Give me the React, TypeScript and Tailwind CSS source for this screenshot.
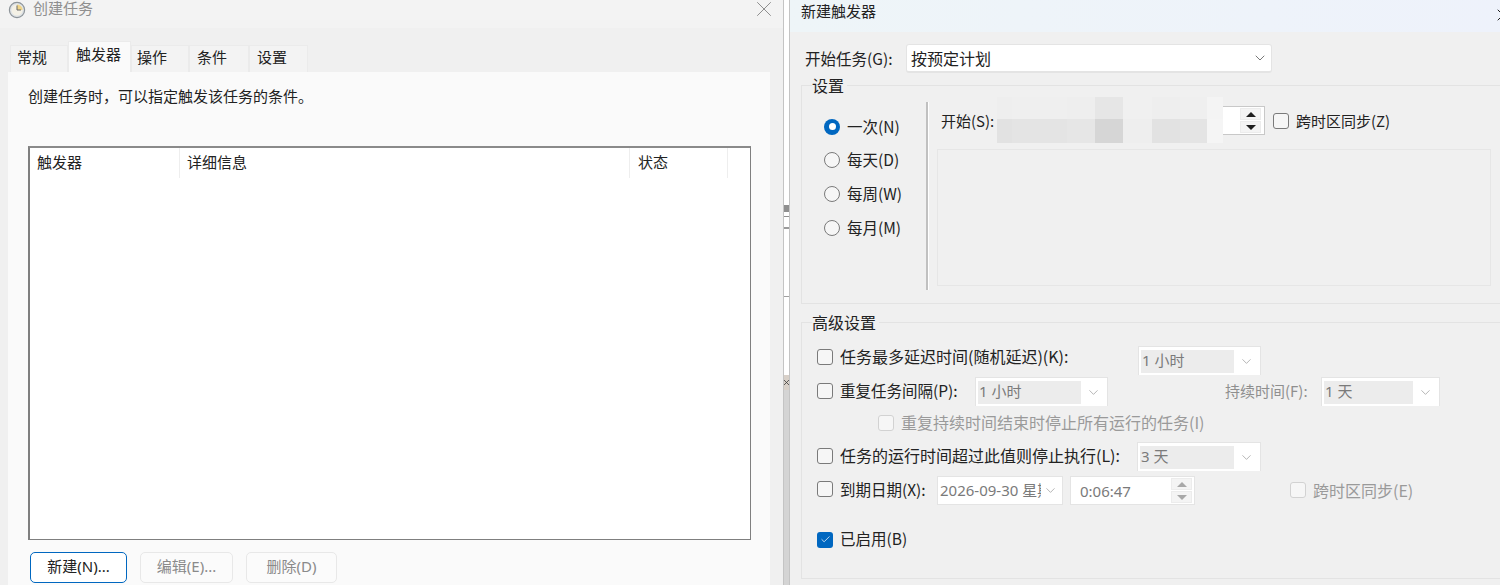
import { Check, ChevronDown, X } from "lucide-react";

const blurTop = [
  "w-[15px] bg-[#eeeeee]",
  "w-[26px] bg-[#efefef]",
  "w-[29px] bg-[#efefef]",
  "w-[28px] bg-[#eeeeee]",
  "w-[28px] bg-[#e6e6e6]",
  "w-[29px] bg-[#f0f0f0]",
  "w-[28px] bg-[#eeeeee]",
  "w-[27px] bg-[#efefef]",
  "w-[16px] bg-[#f4f4f4]",
];

const blurBottom = [
  "w-[15px] bg-[#e2e2e2]",
  "w-[26px] bg-[#e4e4e4]",
  "w-[29px] bg-[#e4e4e4]",
  "w-[28px] bg-[#e6e6e6]",
  "w-[28px] bg-[#d6d6d6]",
  "w-[29px] bg-[#eeeeee]",
  "w-[28px] bg-[#e2e2e2]",
  "w-[27px] bg-[#e4e4e4]",
  "w-[16px] bg-[#f5f5f5]",
];

const tabs = [
  { label: "常规", cls: "w-[58px] h-[27px] pl-[6px] pb-[4px] bg-[#f3f3f3]" },
  { label: "触发器", cls: "w-[63px] h-[31px] pl-[7px] pb-[6px] bg-[#fafafa]" },
  { label: "操作", cls: "w-[58px] h-[27px] pl-[5px] pb-[4px] bg-[#f3f3f3]" },
  { label: "条件", cls: "w-[60px] h-[27px] pl-[7px] pb-[4px] bg-[#f3f3f3]" },
  { label: "设置", cls: "w-[59px] h-[27px] pl-[7px] pb-[4px] bg-[#f3f3f3]" },
];

const radios = ["一次(N)", "每天(D)", "每周(W)", "每月(M)"];

function Radio({ label, on }: { label: string; on?: boolean }) {
  return (
    <div className="flex h-[33.67px] items-center">
      {on ? (
        <span className="flex h-4 w-4 items-center justify-center rounded-full bg-[#0067c0]">
          <span className="h-[7px] w-[7px] rounded-full bg-white" />
        </span>
      ) : (
        <span className="h-4 w-4 rounded-full border border-[#7a7a7a] bg-[#f6f6f6]" />
      )}
      <span className="ml-[7px] pb-[2px] text-[15.5px]">{label}</span>
    </div>
  );
}

function Box({ disabled, checked }: { disabled?: boolean; checked?: boolean }) {
  if (checked) {
    return (
      <span className="flex h-4 w-4 shrink-0 items-center justify-center rounded-[3px] bg-[#0067c0]">
        <Check size={11} strokeWidth={1.6} className="text-white" />
      </span>
    );
  }
  return (
    <span
      className={
        disabled
          ? "h-4 w-4 shrink-0 rounded-[3px] border border-[#d2d2d2] bg-[#f6f6f6]"
          : "h-4 w-4 shrink-0 rounded-[3px] border border-[#7a7a7a] bg-[#f6f6f6]"
      }
    />
  );
}

function OffSelect({ value, width }: { value: string; width: string }) {
  return (
    <div className={`${width} flex h-[29px] shrink-0 items-center border-x border-t border-[#e4e4e4] bg-white pl-[2px] pr-[6px]`}>
      <div className="flex h-[23px] flex-1 items-center bg-[#ececec] pb-[2px] pl-[1px] font-['Noto_Sans','Noto_Sans_CJK_SC',sans-serif] text-[15px] text-[#7a7a7a]">{value}</div>
      <ChevronDown size={15} strokeWidth={1} className="ml-[5px] text-[#8a8a8a]" />
    </div>
  );
}

function Spin({ muted }: { muted?: boolean }) {
  const up = muted ? "border-b-[#a8a8a8]" : "border-b-[#1f1f1f]";
  const down = muted ? "border-t-[#a8a8a8]" : "border-t-[#1f1f1f]";
  return (
    <div className="flex h-[25px] w-[21px] flex-col gap-px">
      <div className="flex flex-1 items-center justify-center border border-[#ececec] bg-[#f4f4f4]">
        <span className={`h-0 w-0 border-x-[5px] border-b-[5px] border-x-transparent ${up}`} />
      </div>
      <div className="flex flex-1 items-center justify-center border border-[#ececec] bg-[#f4f4f4]">
        <span className={`h-0 w-0 border-x-[5px] border-t-[5px] border-x-transparent ${down}`} />
      </div>
    </div>
  );
}

function Clock() {
  return (
    <svg width="18" height="18" viewBox="0 0 18 18">
      <circle cx="9" cy="9" r="7.6" fill="#dfe3e6" stroke="#8d9499" strokeWidth="1.2" />
      <circle cx="9" cy="9" r="5.6" fill="#f4f1e6" />
      <path d="M9 9V3.4A5.6 5.6 0 0 1 14.6 9Z" fill="#f0d58a" />
      <path d="M9 4.5V9H13" fill="none" stroke="#6a6a6a" strokeWidth="1" />
    </svg>
  );
}

export default function App() {
  return (
    <div className="flex h-[585px] w-[1500px] overflow-hidden bg-[#f0f0f0] font-['Noto_Sans','Noto_Sans_CJK_SC',sans-serif] text-[15px] leading-[20px] text-[#222222]">

      {/* create task dialog */}
      <div className="flex w-[783px] shrink-0 flex-col">
        <div className="flex h-[28px] shrink-0 items-start overflow-hidden bg-[#f3f3f3] pl-2 pr-[13px] pt-px">
          <Clock />
          <span className="ml-[7px] leading-[14px] text-[#8f8f8f]">创建任务</span>
          <X size={26} strokeWidth={0.9} className="-mr-[6.5px] -mt-[5.5px] ml-auto text-[#8c8c8c]" />
        </div>

        <div className="ml-[10px] mt-[13px] flex h-[31px] shrink-0 items-end">
          {tabs.map((tab) => (
            <div key={tab.label} className={`flex items-center border-x border-t border-[#ebebeb] ${tab.cls}`}>
              {tab.label}
            </div>
          ))}
        </div>

        <div className="ml-2 flex w-[762px] flex-1 flex-col bg-[#fafafa] pl-5 pr-[19px] pt-[14px]">
          <p>创建任务时，可以指定触发该任务的条件。</p>

          <div className="mt-[40px] h-[394px] border-2 border-b border-r border-[#7f7f7f] border-t-[#8a8a8a] bg-white">
            <div className="flex h-[30px]">
              <div className="w-[150px] border-r border-[#eeeeee] pl-[7px] pt-[4px]">触发器</div>
              <div className="w-[450px] border-r border-[#eeeeee] pl-[7px] pt-[4px]">详细信息</div>
              <div className="w-[98px] border-r border-[#eeeeee] pl-[8px] pt-[4px]">状态</div>
            </div>
          </div>

          <div className="ml-[2px] mt-[12px] flex gap-[13px]">
            <button className="h-[31px] w-[97px] rounded-[5px] border border-[#0067c0] bg-white pb-[3px]">新建(N)...</button>
            <button className="h-[31px] w-[93px] rounded-[5px] border border-[#e8e8e8] bg-[#fbfbfb] pb-[3px] text-[#8a8a8a]">编辑(E)...</button>
            <button className="h-[31px] w-[91px] rounded-[5px] border border-[#e8e8e8] bg-[#fbfbfb] pb-[3px] text-[#8a8a8a]">删除(D)</button>
          </div>
        </div>
      </div>

      {/* gap between the two windows */}
      <div className="flex w-[7px] shrink-0 flex-col border-x border-[#c4c4c4] bg-white">
        <div className="h-[205px]" />
        <div className="h-[7px] bg-[#8f8f8f]" />
        <div className="mt-[4px] h-px bg-[#8f8f8f]" />
        <div className="mt-[10px] h-[2px] bg-[#9a9a9a]" />
        <div className="mt-[67px] h-px bg-[#9f9f9f]" />
        <div className="mt-[78px] flex h-[15px] items-center justify-center overflow-hidden bg-[#d8d0c8]">
          <X size={9} strokeWidth={2} className="shrink-0 text-[#333333]" />
        </div>
        <div className="flex-1 bg-[#d4d4d4]" />
      </div>

      {/* new trigger dialog */}
      <div className="flex w-[710px] shrink-0 flex-col overflow-hidden font-['Noto_Sans_CJK_SC',sans-serif] text-[16px]">
        <div className="flex h-8 shrink-0 items-start justify-between bg-gradient-to-r from-[#eef5f8] to-[#eef2fb] pl-[11px] pt-px text-[15px]">
          <span>新建触发器</span>
          <X size={20} strokeWidth={1.2} className="-mr-[13px] mt-[4px] text-[#1f1f1f]" />
        </div>

        <div className="ml-[15px] mt-[12px] flex h-[29px] items-center">
          <span className="w-[101px] pb-[2px] text-[15.5px]">开始任务(G):</span>
          <div className="flex h-[29px] w-[366px] items-center justify-between rounded-[3px] border border-[#e4e4e4] border-b-2 bg-white pl-[4px] pr-[3px]">
            <span>按预定计划</span>
            <ChevronDown size={16} strokeWidth={1.2} className="text-[#555555]" />
          </div>
        </div>

        <fieldset className="ml-[11px] mt-[2px] h-[229px] w-[720px] shrink-0 border border-[#e3e3e3]">
          <legend className="ml-[10px] h-5 bg-[#f0f0f0] pr-[3px]">设置</legend>
          <div className="flex">
            <div className="w-[124px] pl-[22px] pt-[15px]">
              {radios.map((r, i) => (
                <Radio key={r} label={r} on={i === 0} />
              ))}
            </div>
            <div className="mt-[7px] h-[188px] w-[3px] border-l-2 border-r border-[#c0c0c0] border-r-white" />
            <div className="pl-[8px] pt-[11px]">
              <div className="flex h-[29px] items-center">
                <span className="w-[60px] whitespace-nowrap pl-[4px] text-[15px]">开始(S):</span>
                <div className="relative flex h-[29px] w-[268px] items-center justify-end border border-[#c8c8c8] bg-white pr-[3px]">
                  <div className="absolute -left-[1px] -top-[10px] flex w-[226px] flex-col">
                    <div className="flex h-[22px]">
                      {blurTop.map((cls, i) => (
                        <div key={i} className={cls} />
                      ))}
                    </div>
                    <div className="flex h-[24px]">
                      {blurBottom.map((cls, i) => (
                        <div key={i} className={cls} />
                      ))}
                    </div>
                  </div>
                  <Spin />
                </div>
                <div className="ml-[8px] flex items-center">
                  <Box />
                  <span className="ml-[7px] text-[15px]">跨时区同步(Z)</span>
                </div>
              </div>
              <div className="mt-[14px] h-[137px] w-[554px] border border-[#e6e6e6]" />
            </div>
          </div>
        </fieldset>

        <fieldset className="ml-[11px] mt-[8px] h-[267px] w-[720px] shrink-0 border border-[#e3e3e3]">
          <legend className="ml-[10px] h-5 bg-[#f0f0f0] pr-[3px]">高级设置</legend>
          <div className="flex flex-col pl-[15px] pt-[14px]">
            <div className="flex h-[29px] items-center">
              <div className="flex w-[321px] items-center gap-[7px] pb-[8px]">
                <Box />
                <span className="pb-[2px]">任务最多延迟时间(随机延迟)(K):</span>
              </div>
              <OffSelect value="1 小时" width="w-[123px]" />
            </div>

            <div className="mt-[2px] flex h-[29px] items-center">
              <div className="flex w-[158px] items-center gap-[7px] pb-[2px]">
                <Box />
                <span className="pb-[2px] text-[15.5px]">重复任务间隔(P):</span>
              </div>
              <OffSelect value="1 小时" width="w-[133px]" />
              <span className="ml-[117px] w-[96px] pb-[2px] text-[15px] text-[#8f8f8f]">持续时间(F):</span>
              <OffSelect value="1 天" width="w-[119px]" />
            </div>

            <div className="ml-[61px] mt-[2px] flex h-[30px] items-center gap-[7px] text-[#9a9a9a]">
              <Box disabled />
              <span className="pb-[2px]">重复持续时间结束时停止所有运行的任务(I)</span>
            </div>

            <div className="mt-[4px] flex h-[29px] items-center">
              <div className="flex w-[320px] items-center gap-[7px] pb-[2px]">
                <Box />
                <span className="pb-[2px]">任务的运行时间超过此值则停止执行(L):</span>
              </div>
              <OffSelect value="3 天" width="w-[124px]" />
            </div>

            <div className="mt-[5px] flex h-[29px] items-center">
              <div className="flex w-[120px] items-center gap-[7px] pb-[4px]">
                <Box />
                <span className="whitespace-nowrap text-[15.5px]">到期日期(X):</span>
              </div>
              <div className="flex h-[29px] w-[126px] items-center overflow-hidden border border-[#e4e4e4] bg-white pb-[1px] pl-[2px] pr-[3px] font-['Noto_Sans','Noto_Sans_CJK_SC',sans-serif] text-[15px] text-[#7a7a7a]">
                <span className="w-[101px] shrink-0 overflow-hidden whitespace-nowrap">2026-09-30 星期三</span>
                <ChevronDown size={15} strokeWidth={1} className="ml-[2px] shrink-0 text-[#8a8a8a]" />
              </div>
              <div className="ml-[7px] flex h-[29px] w-[125px] items-center justify-between border border-[#e4e4e4] bg-white pl-[9px] pr-[2px] font-['Noto_Sans','Noto_Sans_CJK_SC',sans-serif] text-[15px] text-[#7a7a7a]">
                <span>0:06:47</span>
                <Spin muted />
              </div>
              <div className="ml-[95px] flex items-center gap-[7px] pb-[2px] text-[#9a9a9a]">
                <Box disabled />
                <span>跨时区同步(E)</span>
              </div>
            </div>

            <div className="mt-[20px] flex h-[29px] items-center gap-[7px]">
              <Box checked />
              <span className="pb-[4px] text-[15.5px]">已启用(B)</span>
            </div>
          </div>
        </fieldset>
      </div>
    </div>
  );
}
